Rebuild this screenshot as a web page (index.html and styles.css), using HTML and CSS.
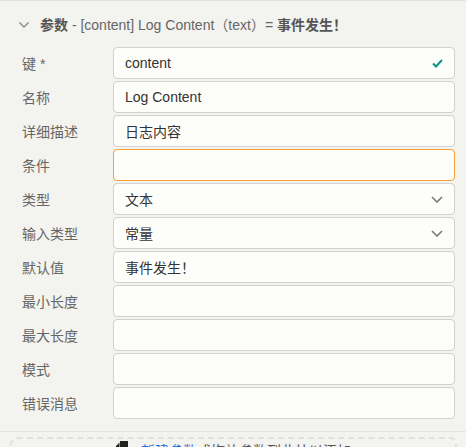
FILE: index.html
```html
<!DOCTYPE html>
<html lang="zh">
<head>
<meta charset="utf-8">
<link rel="stylesheet" href="styles.css">
</head>
<body>
<div class="panel">
  <div class="header">
    <svg class="caret" width="10" height="6" viewBox="0 0 10 6"><path d="M0.5 0.5 L5 5 L9.5 0.5" fill="none" stroke="#8a8a8a" stroke-width="1.4"/></svg>
    <span class="title"><b>参数</b> - [content] Log Content（text）= <b>事件发生！</b></span>
  </div>
  <div class="form">
    <div class="row"><label>键 *</label><div class="field">content<svg class="icon" width="11" height="9" viewBox="0 0 11 9"><path d="M1 4.5 L4 7.5 L10 1" fill="none" stroke="#0e9384" stroke-width="2"/></svg></div></div>
    <div class="row"><label>名称</label><div class="field">Log Content</div></div>
    <div class="row"><label>详细描述</label><div class="field">日志内容</div></div>
    <div class="row"><label>条件</label><div class="field focus"></div></div>
    <div class="row"><label>类型</label><div class="field">文本<svg class="icon" width="12" height="7" viewBox="0 0 12 7"><path d="M1 1 L6 6 L11 1" fill="none" stroke="#7a7a7a" stroke-width="1.6"/></svg></div></div>
    <div class="row"><label>输入类型</label><div class="field">常量<svg class="icon" width="12" height="7" viewBox="0 0 12 7"><path d="M1 1 L6 6 L11 1" fill="none" stroke="#7a7a7a" stroke-width="1.6"/></svg></div></div>
    <div class="row"><label>默认值</label><div class="field">事件发生！</div></div>
    <div class="row"><label>最小长度</label><div class="field"></div></div>
    <div class="row"><label>最大长度</label><div class="field"></div></div>
    <div class="row"><label>模式</label><div class="field"></div></div>
    <div class="row"><label>错误消息</label><div class="field"></div></div>
  </div>
  <div class="footer">
    <div class="drop">
      <svg class="dicon" width="12" height="14" viewBox="0 0 12 14"><path d="M0 5 L3.5 1.5 L3.5 14 L0 14 Z" fill="#222"/><rect x="4" y="0" width="8" height="14" fill="#222"/></svg>
      <span><a class="link">新建参数</a>或拖放参数到此处以添加</span>
    </div>
  </div>
</div>
</body>
</html>
```
FILE: styles.css
```css
html, body {
  margin: 0;
  padding: 0;
}
body {
  background: #f3f3ef;
  font-family: "Liberation Sans", "Noto Sans CJK SC", sans-serif;
  font-size: 14px;
  width: 466px;
  height: 447px;
  overflow: hidden;
}
.panel {
  border-top: 1px solid #e2e2de;
}
.header {
  height: 46px;
  display: flex;
  align-items: center;
  padding-left: 19px;
  color: #666;
}
.caret {
  margin-right: 11px;
  margin-top: 1px;
}
.title b {
  color: #555;
}
.form {
  display: flex;
  flex-direction: column;
  gap: 2px;
  padding-right: 11px;
}
.row {
  display: flex;
  align-items: center;
  height: 32px;
}
.row label {
  width: 91px;
  padding-left: 22px;
  color: #666;
  flex: none;
}
.field {
  flex: 1;
  height: 32px;
  box-sizing: border-box;
  border: 1px solid #d2d2d0;
  border-radius: 4px;
  background: #fdfdfa;
  display: flex;
  align-items: center;
  padding: 0 11px;
  color: #333;
}
.field.focus {
  border-color: #f7a033;
}
.icon {
  margin-left: auto;
}
.footer {
  margin-top: 12px;
  border-top: 1px solid #e4e4e0;
  padding: 5px 9px 0 10px;
}
.drop {
  border: 2px dashed #e1e1dd;
  border-radius: 7px;
  height: 40px;
  display: flex;
  justify-content: center;
  align-items: flex-start;
  padding-top: 1px;
  color: #555;
}
.dicon {
  margin-top: 1px;
  margin-right: 13px;
}
.link {
  color: #1a6fe0;
}
```
